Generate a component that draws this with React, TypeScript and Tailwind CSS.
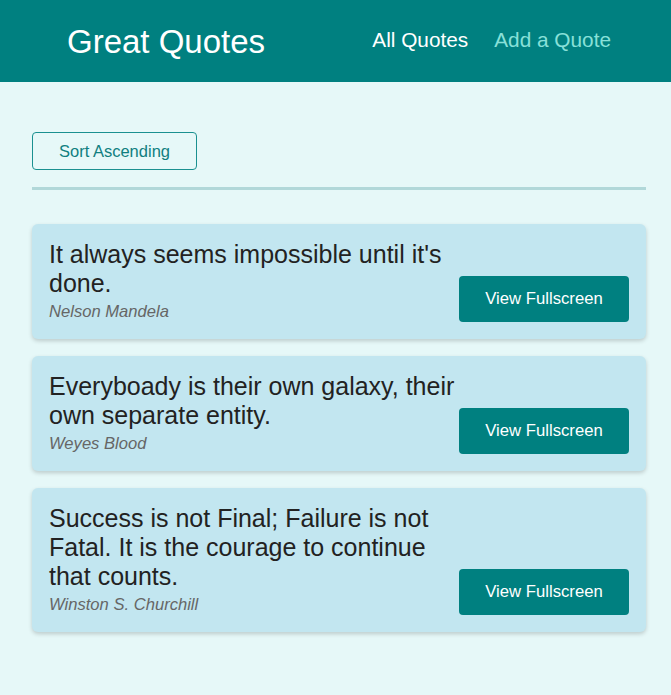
import React from "react";

const quotes = [
  { text: "It always seems impossible until it's done.", author: "Nelson Mandela" },
  { text: "Everyboady is their own galaxy, their own separate entity.", author: "Weyes Blood" },
  { text: "Success is not Final; Failure is not Fatal. It is the courage to continue that counts.", author: "Winston S. Churchill" },
];

export default function App() {
  return (
    <div className="min-h-[695px] bg-[#e6f8f8]" style={{ fontFamily: '"Liberation Sans", Arial, sans-serif' }}>
      <header className="h-[82px] bg-[#008080] flex items-center justify-between pl-[67px] pr-[60px]">
        <h1 className="text-[33px] text-white leading-none">Great Quotes</h1>
        <nav className="flex items-center gap-[26px] text-[20.8px] leading-none -mt-[2px]">
          <span className="text-white">All Quotes</span>
          <span className="text-[#88e0d9]">Add a Quote</span>
        </nav>
      </header>
      <main className="ml-[32px] w-[614px] pt-[50px]">
        <div>
          <button className="w-[165px] h-[38px] border border-[#1a9090] rounded-[4px] text-[#107f80] text-[16.5px]">
            Sort Ascending
          </button>
        </div>
        <div className="mt-[17px] h-[3px] bg-[#b1d8d9]" />
        <ul className="mt-[34px] flex flex-col gap-[17px]">
          {quotes.map((q) => (
            <li
              key={q.author}
              className="bg-[#c2e6f0] rounded-[6px] shadow-[0_2px_4px_rgba(0,0,0,0.18)] pl-[17px] pr-[17px] pt-[16px] pb-[15px] flex items-end"
            >
              <figure className="flex-1 min-w-0">
                <blockquote className="text-[25px] leading-[29px] text-[#222]">{q.text}</blockquote>
                <figcaption className="mt-[2px] italic text-[16.6px] leading-[24px] text-[#666]">{q.author}</figcaption>
              </figure>
              <button className="w-[170px] h-[46px] mb-[2px] bg-[#008080] rounded-[4px] text-white text-[16.7px] shrink-0">
                View Fullscreen
              </button>
            </li>
          ))}
        </ul>
      </main>
    </div>
  );
}
